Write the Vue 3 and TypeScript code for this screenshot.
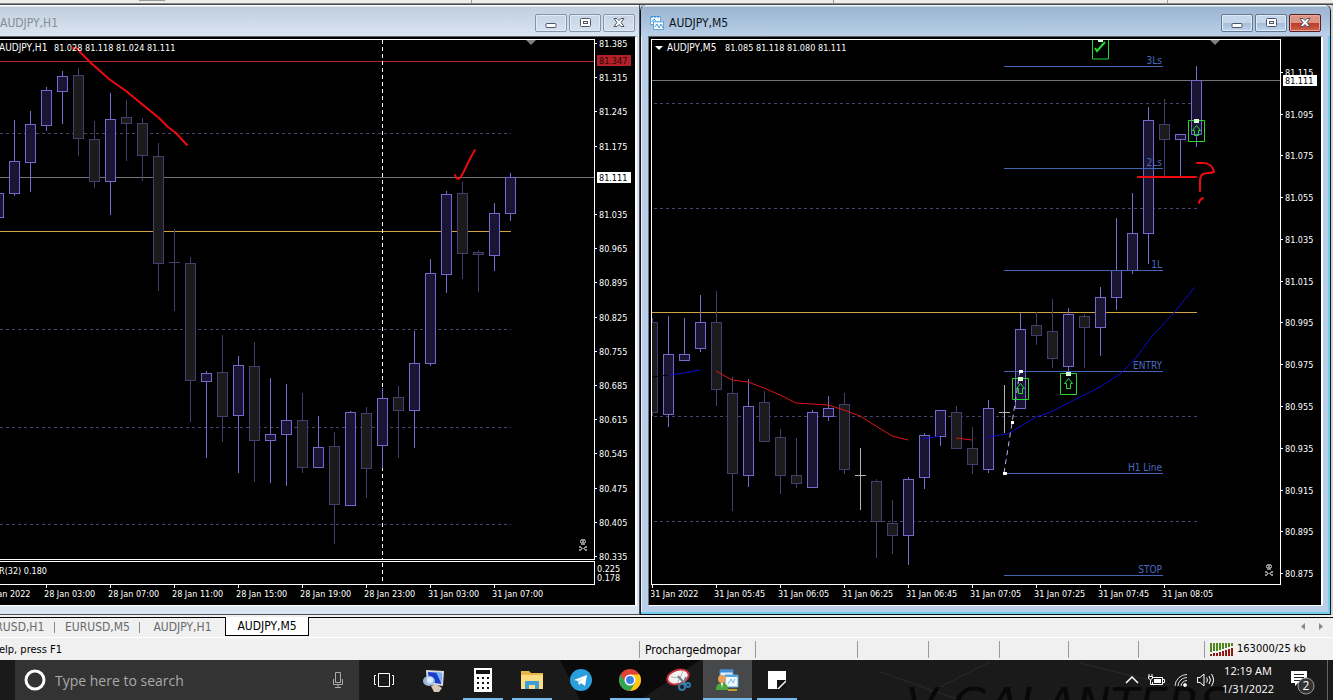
<script setup lang="ts">
type Kind = 'up' | 'down' | 'doji'
type Candle = [x: number, high: number, top: number, bottom: number, low: number, kind: Kind]

interface Tag { y: number; text: string; tone: 'last' | 'alert' }
interface Level { y: number; text: string }
interface ChartWindow {
  id: string
  title: string
  active: boolean
  originX: number
  header: { symbol: string; symbolX: number; valueX: number; values: string }
  priceY: number
  alertY: number | null
  goldY: number
  endX: number
  dashes: number[]
  dashStart: number
  shiftX: number
  skull: [number, number]
  candles: Candle[]
  prices: [number, string][]
  tags: Tag[]
  times: [number, string][]
  levels: Level[]
}

const h1: ChartWindow = {
  id: 'h1',
  title: 'AUDJPY,H1',
  active: false,
  originX: 0,
  header: { symbol: 'AUDJPY,H1', symbolX: -1, valueX: 54, values: '81.028 81.118 81.024 81.111' },
  priceY: 177,
  alertY: 61,
  goldY: 231,
  endX: 511,
  dashes: [133, 329, 427, 524],
  dashStart: 0,
  shiftX: 531,
  skull: [583, 545],
  candles: [
    [-2, 193, 193, 217, 217, 'up'], [14, 120, 161, 193, 195, 'up'], [30, 111, 124, 162, 191, 'up'],
    [46, 87, 90, 125, 130, 'up'], [62, 71, 76, 91, 123, 'up'], [78, 68, 75, 138, 155, 'down'],
    [94, 121, 139, 181, 187, 'down'], [110, 93, 119, 181, 214, 'up'], [126, 100, 117, 123, 160, 'down'],
    [142, 118, 123, 155, 180, 'down'], [158, 143, 156, 263, 290, 'down'], [174, 229, 262, 262, 310, 'down'],
    [190, 257, 263, 380, 421, 'down'], [206, 371, 373, 381, 457, 'up'], [222, 335, 372, 416, 441, 'down'],
    [238, 356, 365, 415, 472, 'up'], [254, 342, 366, 440, 481, 'down'], [270, 378, 434, 440, 482, 'up'],
    [286, 384, 420, 434, 485, 'up'], [302, 393, 420, 467, 472, 'down'], [318, 416, 447, 467, 467, 'up'],
    [334, 432, 446, 504, 543, 'down'], [350, 411, 412, 505, 505, 'up'], [366, 407, 413, 468, 497, 'down'],
    [382, 388, 398, 445, 467, 'up'], [398, 386, 397, 410, 457, 'down'], [414, 331, 363, 410, 447, 'up'],
    [430, 259, 273, 363, 365, 'up'], [446, 191, 194, 274, 292, 'up'], [462, 182, 193, 253, 278, 'down'],
    [478, 250, 252, 254, 291, 'down'], [494, 203, 213, 255, 270, 'up'], [510, 173, 177, 213, 220, 'up'],
  ],
  prices: [
    [43, '81.385'], [77, '81.315'], [111, '81.245'], [146, '81.175'], [214, '81.035'], [248, '80.965'],
    [282, '80.895'], [317, '80.825'], [351, '80.755'], [385, '80.685'], [419, '80.615'], [453, '80.545'],
    [488, '80.475'], [522, '80.405'], [556, '80.335'],
  ],
  tags: [{ y: 60, text: '81.347', tone: 'alert' }, { y: 177, text: '81.111', tone: 'last' }],
  times: [
    [-16, '27 Jan 2022'], [46, '28 Jan 03:00'], [110, '28 Jan 07:00'], [174, '28 Jan 11:00'], [238, '28 Jan 15:00'],
    [302, '28 Jan 19:00'], [366, '28 Jan 23:00'], [430, '31 Jan 03:00'], [494, '31 Jan 07:00'],
  ],
  levels: [],
}

const m5: ChartWindow = {
  id: 'm5',
  title: 'AUDJPY,M5',
  active: true,
  originX: 652,
  header: { symbol: 'AUDJPY,M5', symbolX: 667, valueX: 725, values: '81.085 81.118 81.080 81.111' },
  priceY: 80,
  alertY: null,
  goldY: 312,
  endX: 1197,
  dashes: [103, 208, 416, 521],
  dashStart: 654,
  shiftX: 1215,
  skull: [1269, 570],
  candles: [
    [652, 318, 322, 412, 415, 'down'], [668, 316, 354, 414, 426, 'up'], [684, 318, 354, 360, 360, 'up'],
    [700, 295, 322, 348, 351, 'up'], [716, 291, 322, 389, 405, 'down'], [732, 377, 393, 473, 510, 'down'],
    [748, 379, 406, 475, 486, 'up'], [764, 391, 402, 441, 441, 'down'], [780, 429, 437, 475, 493, 'down'],
    [796, 438, 475, 483, 487, 'down'], [812, 410, 412, 487, 487, 'up'], [828, 396, 408, 416, 420, 'up'],
    [844, 393, 404, 469, 473, 'down'], [860, 448, 475, 475, 509, 'doji'], [876, 479, 481, 521, 557, 'down'],
    [892, 500, 523, 535, 553, 'down'], [908, 477, 479, 535, 564, 'up'], [924, 433, 435, 477, 488, 'up'],
    [940, 410, 410, 436, 445, 'up'], [956, 406, 412, 448, 448, 'down'], [972, 427, 448, 464, 473, 'down'],
    [988, 400, 408, 469, 472, 'up'], [1004, 385, 412, 412, 432, 'doji'], [1020, 313, 329, 408, 408, 'up'],
    [1036, 312, 325, 335, 344, 'down'], [1052, 299, 331, 358, 367, 'down'], [1068, 308, 314, 366, 372, 'up'],
    [1084, 314, 316, 327, 367, 'down'], [1100, 287, 297, 327, 355, 'up'], [1116, 218, 270, 297, 309, 'up'],
    [1132, 193, 233, 270, 273, 'up'], [1148, 107, 120, 233, 263, 'up'], [1164, 99, 124, 139, 176, 'down'],
    [1180, 134, 134, 139, 176, 'up'], [1196, 66, 80, 134, 146, 'up'],
  ],
  prices: [
    [72, '81.115'], [114, '81.095'], [155, '81.075'], [197, '81.055'], [239, '81.035'], [281, '81.015'],
    [322, '80.995'], [364, '80.975'], [406, '80.955'], [448, '80.935'], [490, '80.915'], [531, '80.895'],
    [573, '80.875'],
  ],
  tags: [{ y: 80, text: '81.111', tone: 'last' }],
  times: [
    [652, '31 Jan 2022'], [716, '31 Jan 05:45'], [780, '31 Jan 06:05'], [844, '31 Jan 06:25'], [908, '31 Jan 06:45'],
    [972, '31 Jan 07:05'], [1036, '31 Jan 07:25'], [1100, '31 Jan 07:45'], [1164, '31 Jan 08:05'],
  ],
  levels: [
    { y: 66, text: '3Ls' }, { y: 168, text: '2Ls' }, { y: 270, text: '1L' },
    { y: 371, text: 'ENTRY' }, { y: 473, text: 'H1 Line' }, { y: 575, text: 'STOP' },
  ],
}

const windows = [h1, m5]
const buySignals: [number, number][] = [[1012, 378], [1060, 373], [1188, 120]]
const tabs = ['EURUSD,H1', 'EURUSD,M5', 'AUDJPY,H1', 'AUDJPY,M5']

const plotTop = 40
const axisTop = 39
const axisLeft = 4
</script>

<template>
  <div class="desktop">
    <div class="toolbar-edge"><i class="grip"></i><i class="tick t1"></i><i class="tick t2"></i><i class="tick t3"></i></div>

    <main class="workspace">
      <section v-for="w in windows" :key="w.id" class="win" :class="[w.id, { active: w.active }]">
        <header class="titlebar">
          <svg v-if="w.active" class="win-icon" width="14" height="14" viewBox="0 0 14 14" aria-hidden="true">
            <path d="M.5.500h10v8H.5z" fill="#eef8ff" stroke="#5ba3da" />
            <path d="M1 1h2M4 1h2M7 1h2" stroke="#2f7fc4" />
            <path d="M2 6l2-3 2 2" stroke="#4f9bd6" fill="none" />
            <path d="M3.500 5.500h10v8h-10z" fill="#f6fcff" stroke="#5ba3da" />
            <path d="M4 6h9" stroke="#8fc4ea" />
            <path d="M5 11l2-3 2 4 2-4 2 4" stroke="#4f9bd6" fill="none" />
          </svg>
          <h2>{{ w.title }}</h2>
          <div class="caption-buttons">
            <button type="button" aria-label="Minimize">
              <svg width="14" height="12" viewBox="0 0 14 12"><rect x="2" y="6.500" width="10" height="4" rx="1" fill="#fff" stroke="#4c5566" /></svg>
            </button>
            <button type="button" aria-label="Maximize">
              <svg width="14" height="12" viewBox="0 0 14 12"><rect x="2.500" y="1.500" width="10" height="8" rx="1" fill="#fff" stroke="#4c5566" /><rect x="5.500" y="4.500" width="4" height="2" fill="none" stroke="#4c5566" /></svg>
            </button>
            <button type="button" class="close" aria-label="Close">
              <svg width="14" height="12" viewBox="0 0 14 12"><path d="M2 1.500h3l2 2 2-2h3L9 5.500l3 4H9l-2-2-2 2H2l3-4z" fill="#fff" stroke="#4c5566" /></svg>
            </button>
          </div>
        </header>

        <div class="client">
          <div class="plot">
            <svg class="fill" role="img" :aria-label="w.title + ' chart'">
              <g :transform="`translate(${-w.originX} ${-plotTop})`">
                <rect :x="w.originX" :y="w.priceY" width="100%" height="1" fill="#6f7678" />
                <rect v-if="w.alertY" x="0" :y="w.alertY" width="100%" height="1" fill="#b8242c" />
                <rect :x="w.originX" :y="w.goldY" :width="w.endX - w.originX" height="1" fill="#cfa445" />
                <line
                  v-for="d in w.dashes" :key="d" :x1="w.dashStart" :x2="w.endX" :y1="d + 0.5" :y2="d + 0.5"
                  stroke="#47456e" stroke-dasharray="3 3"
                />
                <line v-if="!w.active" x1="382.5" x2="382.5" y1="40" y2="700" stroke="#fff" stroke-dasharray="4 3" />

                <g v-for="c in w.candles" :key="c[0]" :class="c[5]" shape-rendering="crispEdges">
                  <rect class="edge" :x="c[0]" :y="c[1]" width="1" :height="c[4] - c[1] + 1" />
                  <rect class="edge" :x="c[0] - 5" :y="c[2]" width="11" :height="c[3] - c[2] + 1" />
                  <rect v-if="c[3] > c[2] + 1" class="body" :x="c[0] - 4" :y="c[2] + 1" width="9" :height="c[3] - c[2] - 1" />
                </g>

                <g v-for="l in w.levels" :key="l.text">
                  <rect x="1004" :y="l.y" width="159" height="1" fill="#4464b4" />
                  <text class="level" x="1162" :y="l.y - 2" text-anchor="end">{{ l.text }}</text>
                </g>

                <path :d="`M${w.shiftX - 5} 40h10l-5 5z`" fill="#808080" />
                <g :transform="`translate(${w.skull[0] - 5} ${w.skull[1] - 6})`" fill="#8e8e8e" shape-rendering="crispEdges">
                  <path d="M3 0h4v1h1v3H7v2H3V4H2V1h1z" />
                  <path d="M3 2h1v1H3zM6 2h1v1H6z" fill="#000" />
                  <path d="M1 7h2v1h1v1h2V8h1V7h2v2H7v1h2v2H7v-1H6v-1H4v1H3v1H1v-2h2V9H1z" />
                </g>

                <template v-if="w.active">
                  <path d="M652 377l16-2" class="curve flat" />
                  <path d="M670 375l14-2 16-3" class="curve rising" />
                  <path d="M716 371l16 9 16 2 16 6 16 7 16 8 16 1 16 1 16 5 16 6 16 10 16 10 16 4M956 438l16 2" class="curve falling" />
                  <path d="M924 439l16-3M988 437l19-3 16-9 13-8 15-5 17-9 16-8 16-8 20-13 15-15 18-24 20-21 22-27" class="curve rising" />
                  <path d="M1004 473l8-50 8-52" fill="none" stroke="#b9b4e8" stroke-dasharray="5 4" />
                  <g fill="#fff">
                    <rect x="1003" y="472" width="4" height="3" /><rect x="1011" y="421" width="3" height="3" /><rect x="1019" y="370" width="4" height="3" />
                  </g>
                  <path d="M1092.500 39v20h16V39" class="signal" />
                  <path d="M1095 48l2 3 8-9" class="signal check" />
                  <rect x="1098" y="40" width="5" height="2" fill="#d8ffd8" />
                  <g v-for="s in buySignals" :key="s[0]" :transform="`translate(${s[0]} ${s[1]})`">
                    <path d="M.5.500h16v21H.5z" class="signal" />
                    <path d="M8.500 5.500l4 5h-2v5h-4v-5h-2z" class="signal" />
                    <rect x="6" y="-1" width="5" height="4" fill="#d8ffd8" />
                  </g>
                  <g class="pen">
                    <path d="M1138 177h58" />
                    <path d="M1197 163h6c6 0 10 4 11 9-4 2-11 0-13 4l-1 4v11" />
                    <path d="M1199 203q0-3 4-5" />
                  </g>
                  <path d="M655 46h8l-4 4z" fill="#fff" />
                </template>
                <g v-else class="pen">
                  <path d="M73 48q4-1 7 4l11 11 18 16 17 12 17 14 16 13 9 9 8 6 11 12" />
                  <path d="M455 175c1 3 3 5 5 3 5-7 9-19 15-28" />
                </g>

                <text class="symbol" :x="w.header.symbolX" y="51">{{ w.header.symbol }}</text>
                <text
                  v-for="(v, i) in w.header.values.split(' ')" :key="i" class="value" :x="w.header.valueX + i * 31" y="51"
                >{{ v }}</text>
              </g>
            </svg>
          </div>

          <div v-if="!w.active" class="indicator">
            <svg class="fill" role="img" aria-label="ATR indicator">
              <line x1="382.5" x2="382.5" y1="1" y2="30" stroke="#fff" stroke-dasharray="4 3" />
              <text class="value" x="47" y="12" text-anchor="end">ATR(32) 0.180</text>
            </svg>
          </div>

          <div class="price-axis">
            <svg class="fill" aria-label="Price scale">
              <g :transform="`translate(0 ${-axisTop})`">
                <g v-for="p in w.prices" :key="p[1]">
                  <rect x="0" :y="p[0]" width="2" height="1" fill="#fff" />
                  <text class="value" :x="axisLeft" :y="p[0] + 4">{{ p[1] }}</text>
                </g>
                <g v-for="t in w.tags" :key="t.text" :class="t.tone">
                  <rect class="tag" x="2" :y="t.y - 5" width="34" height="11" />
                  <text class="value" :x="axisLeft" :y="t.y + 4">{{ t.text }}</text>
                </g>
                <g v-if="!w.active">
                  <text class="value" x="2" y="572">0.225</text>
                  <text class="value" x="2" y="581">0.178</text>
                </g>
              </g>
            </svg>
          </div>

          <div class="time-axis">
            <svg class="fill" aria-label="Time scale">
              <g :transform="`translate(${w.active ? 1 - w.originX : 0} 0)`">
                <g v-for="t in w.times" :key="t[1]">
                  <rect :x="t[0]" y="0" width="1" height="3" fill="#fff" />
                  <text class="value" :x="t[0] - 2" y="12">{{ t[1] }}</text>
                </g>
              </g>
            </svg>
          </div>
        </div>
      </section>
    </main>

    <nav class="tabs" aria-label="Charts">
      <div class="tab-clip">
        <button v-for="t in tabs" :key="t" type="button" :class="{ current: t === 'AUDJPY,M5' }">{{ t }}</button>
      </div>
      <div class="tab-rest">
        <button type="button" aria-label="Scroll tabs left"><svg width="6" height="8"><path d="M5 0v7L1 3.500z" fill="#8a8a8a" /></svg></button>
        <button type="button" aria-label="Scroll tabs right"><svg width="6" height="8"><path d="M1 0v7l4-3.500z" fill="#8a8a8a" /></svg></button>
      </div>
    </nav>

    <div class="status">
      <div class="help"><span>For Help, press F1</span></div>
      <div class="cell profile">Prochargedmopar</div>
      <div class="cell w102"></div>
      <div class="cell w71"></div>
      <div class="cell w71"></div>
      <div class="cell w69"></div>
      <div class="cell w70"></div>
      <div class="cell w66"></div>
      <div class="cell traffic">
        <svg width="24" height="13" viewBox="0 0 24 13" aria-hidden="true">
          <path d="M1 0v9M4 0v8M7 0v8M10 0v7M13 0v6M16 0v5M19 0v4M22 0v3" stroke="#4c8a1c" stroke-width="2" />
          <path d="M1 11v2M4 10v3M7 10v3M10 9v4M13 8v5M16 7v6M19 6v7M22 5v8" stroke="#8c1a14" stroke-width="2" />
        </svg>
        163000/25 kb
      </div>
    </div>

    <footer class="taskbar">
      <svg class="wallpaper" aria-hidden="true">
        <path d="M560 0h140l-60 40h-60z" fill="#000" opacity=".6" />
        <path d="M880 12l80 28M990 2l-60 30M1080 3l90 22" stroke="#2b2b2b" fill="none" />
        <text x="906" y="61">V GALANTERS</text>
      </svg>
      <label class="search">
        <svg width="22" height="22" viewBox="0 0 22 22" aria-hidden="true"><circle cx="11" cy="11" r="9" fill="none" stroke="#fff" stroke-width="3" /></svg>
        <input type="text" placeholder="Type here to search" aria-label="Type here to search" />
        <svg width="12" height="18" viewBox="0 0 12 18" aria-hidden="true"><path d="M3.500 1.500h5v10h-5zM1.500 8v5.500h9V8M6 13.500V17M3 16.500h6" fill="none" stroke="#aaa" /></svg>
      </label>

      <button type="button" class="app first" aria-label="Task view">
        <svg width="22" height="16" viewBox="0 0 22 16"><path d="M5.500 1.500h11v13h-11zM3 3.500H1.500v9H3M19 3.500h1.500v9H19" fill="none" stroke="#fff" /></svg>
      </button>
      <button type="button" class="app" aria-label="Remote desktop">
        <svg width="26" height="26" viewBox="0 0 26 26">
          <path d="M5 3l18 1-1 15-16-2z" fill="#d7dbe2" /><path d="M7 5l14 1-1 11-12-2z" fill="#183fc8" /><path d="M15 5l6 1-1 10z" fill="#7db2ff" />
          <ellipse cx="8" cy="14" rx="6" ry="5" fill="#a9c8ea" opacity=".9" /><circle cx="9" cy="13" r="3" fill="#d9ebf8" />
          <path d="M10 19l5-2 6 4-3 4h-5z" fill="#d9c7b8" />
        </svg>
      </button>
      <button type="button" class="app running" aria-label="Calculator">
        <svg width="18" height="24" viewBox="0 0 18 24">
          <path d="M0 0h18v24H0z" fill="#fff" /><path d="M2 2h14v4H2z" fill="#141414" />
          <path d="M3 10h12M3 15h12M3 20h12" stroke="#141414" stroke-width="2" stroke-dasharray="2 3" />
        </svg>
      </button>
      <button type="button" class="app running" aria-label="File Explorer">
        <svg width="24" height="20" viewBox="0 0 24 20">
          <path d="M1 1h8l2 2h12v16H1z" fill="#e8b64a" /><path d="M1 5h22v14H1z" fill="#fcdd83" /><path d="M5 19v-8h14v8h-4v-4H9v4z" fill="#3d9fd6" />
        </svg>
      </button>
      <button type="button" class="app" aria-label="Telegram">
        <svg width="22" height="22" viewBox="0 0 22 22"><circle cx="11" cy="11" r="11" fill="#2a9fdc" /><path d="M4 11l13-5-2 11-4-3-2 2-1-4z" fill="#fff" /><path d="M8 12l7-4-6 5v3z" fill="#bcdcf0" /></svg>
      </button>
      <button type="button" class="app running" aria-label="Chrome">
        <svg width="22" height="22" viewBox="0 0 22 22">
          <circle cx="11" cy="11" r="11" fill="#e04436" />
          <path d="M11 5.500h9.500A11 11 0 0 1 11 22l5-8.500z" fill="#fbc916" />
          <path d="M1.500 5.500l5 8 9.500 0L11 22A11 11 0 0 1 1.500 5.500z" fill="#31a650" />
          <circle cx="11" cy="11" r="5.500" fill="#fff" /><circle cx="11" cy="11" r="4" fill="#3b7fe8" />
        </svg>
      </button>
      <button type="button" class="app" aria-label="Snipping Tool">
        <svg width="26" height="24" viewBox="0 0 26 24">
          <ellipse cx="12" cy="9" rx="11" ry="7" transform="rotate(-18 12 9)" fill="#f4f1f2" stroke="#c6303a" stroke-width="2" />
          <path d="M5 9l9 1 3-7M14 10l-3 5" stroke="#b5b0b8" fill="none" />
          <path d="M12 8l8 9M20 9l-3 8" stroke="#6d8090" stroke-width="2" />
          <circle cx="16" cy="19" r="3" fill="none" stroke="#2f7ca8" stroke-width="2" /><circle cx="22" cy="17" r="2" fill="none" stroke="#2f7ca8" stroke-width="2" />
        </svg>
      </button>
      <button type="button" class="app current" aria-label="MetaTrader">
        <svg width="24" height="22" viewBox="0 0 24 22">
          <path d="M4 1h13v10H4z" fill="#dff0fc" stroke="#3f8fd2" /><path d="M4 2h13" stroke="#3f8fd2" stroke-width="3" />
          <path d="M9 6h13v12H9z" fill="#eef8ff" stroke="#5aa6dd" /><path d="M9 7h13" stroke="#5aa6dd" stroke-width="2" />
          <path d="M12 15l3-5 2 4 2-4" stroke="#7fb5df" fill="none" />
          <circle cx="6" cy="10" r="4" fill="#e9a05f" /><path d="M0 21c0-5 2-7 6-7s6 2 6 7z" fill="#4ea83c" /><path d="M5 14h2l-1 5z" fill="#fff" />
          <path d="M12 21h9" stroke="#c99b2c" stroke-width="2" />
        </svg>
      </button>
      <button type="button" class="app running" aria-label="Sticky Notes">
        <svg width="18" height="18" viewBox="0 0 18 18"><path d="M0 0h18v18H0z" fill="#fff" /><path d="M9 18V9h9z" fill="#141414" /><path d="M11 18l7-7v7z" fill="#141414" /></svg>
      </button>

      <div class="tray">
        <button type="button" aria-label="Show hidden icons"><svg width="14" height="8"><path d="M1 7l6-6 6 6" fill="none" stroke="#fff" stroke-width="1.500" /></svg></button>
        <button type="button" class="battery" aria-label="Battery">
          <svg width="17" height="12" viewBox="0 0 17 12"><path d="M5 3.500h9.500v7H4.500V8M14.500 5.500h2v3h-2M1 0v2M4 0v2M.5 2.500h4v2l-2 1-2-1zM2.500 6v4.500H5" fill="none" stroke="#fff" /><path d="M6 5h7v4H6z" fill="#fff" /></svg>
        </button>
        <button type="button" aria-label="Network">
          <svg width="14" height="14" viewBox="0 0 14 14" fill="none" stroke="#ddd"><path d="M1 13A12 12 0 0 1 13 1.500M4 13a9 9 0 0 1 9-8.500M7 13a6 6 0 0 1 6-5.500" /><circle cx="11" cy="12" r="1.500" fill="#fff" /></svg>
        </button>
        <button type="button" aria-label="Volume">
          <svg width="17" height="14" viewBox="0 0 17 14" fill="none" stroke="#fff"><path d="M.5 4.500H3l4-3.500v12L3 9.500H.5z" /><path d="M9.500 4.500q2 2.500 0 5M12 3q3 4 0 8M14.500 1q4 6 0 12" /></svg>
        </button>
        <div class="clock"><time>12:19 AM</time><time>1/31/2022</time></div>
        <button type="button" class="notes" aria-label="Notifications">
          <svg width="24" height="26" viewBox="0 0 24 26">
            <path d="M0 1h16v12H7l-3 3v-3H0z" fill="#fff" /><path d="M3 4.500h10M3 7.500h10M3 10.500h6" stroke="#222" />
            <circle cx="15" cy="16" r="8" fill="#333" stroke="#999" />
            <text x="15" y="20" text-anchor="middle" class="badge">2</text>
          </svg>
        </button>
        <i class="peek"></i>
      </div>
    </footer>
  </div>
</template>

<style>
body { margin: 0; background: #f0f0f0; }
</style>

<style scoped>
.desktop {
  display: flex; flex-direction: column; min-height: 100vh; overflow: hidden;
  background: #f0f0f0; color: #000; font-family: "DejaVu Sans Condensed", "DejaVu Sans", "Open Sans", sans-serif; font-size: 12px;
}
button { margin: 0; padding: 0; border: 0; background: none; font: inherit; color: inherit; display: flex; align-items: center; justify-content: center; }
svg { display: block; flex: none; }
.fill { width: 100%; height: 100%; overflow: hidden; }

.toolbar-edge { height: 3px; position: relative; border-bottom: 1px solid #8b8b8b; background: #efedea; }
.grip { position: absolute; left: 139px; top: 0; width: 26px; height: 1px; background: #999; }
.tick { position: absolute; top: 0; width: 1px; height: 3px; background: #999; }
.t1 { left: 471px; }
.t2 { left: 833px; }
.t3 { left: 1167px; }

.workspace { flex: 1; display: grid; grid-template-columns: minmax(0, 640fr) minmax(0, 691fr) 2px; border-top: 1px solid #45484c; background: #cfd3d6; }
.win { display: flex; flex-direction: column; box-sizing: border-box; min-width: 0; border-bottom: 1px solid #4b4f5a; border-right: 1px solid #4b4f5a; background: #dae5f1; }
.win.active { background: #b9cfe9; border: 1px solid #10151c; border-top: 0; border-radius: 6px 6px 0 0; box-shadow: inset -2px -2px #72cdef, inset 1px 1px #e8f1fa; }
.titlebar { height: 31px; display: flex; align-items: center; padding-right: 4px; background: linear-gradient(#fff 0 1px, #c1cedc 2px, #d9e5f2); overflow: hidden; }
.active .titlebar { padding: 0 9px 0 9px; border-radius: 6px 6px 0 0; background: linear-gradient(#f4f8fc 0 1px, #9bb4d0 2px, #bad0e9); }
.titlebar h2 { margin: 0; padding-top: 5px; font-size: 12px; font-weight: 400; color: #858d96; }
.active .titlebar h2 { margin-left: 5px; color: #0b1420; }
.win-icon { margin-top: 5px; }
.caption-buttons { display: flex; gap: 2px; margin: 5px 0 0 auto; }
.caption-buttons button { box-sizing: border-box; width: 32px; height: 18px; border: 1px solid #8494aa; border-radius: 2px; box-shadow: inset 0 0 0 1px #e2ebf5; }
.active .caption-buttons button { border-color: #5f7792; background: linear-gradient(#c5d7ea 0 50%, #a4bdd8 50%, #bfd5ec); }
.active .caption-buttons .close { border-color: #5b1f22; background: linear-gradient(#dc9485 0 48%, #bd3a25 50%, #d0604c); box-shadow: inset 0 0 0 1px #e3a99e; }

.client {
  flex: 1; display: grid; min-height: 0; box-sizing: border-box; margin: 0 2px 8px 0; padding-top: 2px;
  grid-template: "plot axis" minmax(0, 1fr) "ind axis" auto "time time" 20px / minmax(0, 1fr) 40px;
  background: #000; border: solid #fff; border-width: 1px 2px 1px 0; border-top-color: #5d6268;
}
.active .client { margin: 0 7px 8px 7px; padding-left: 2px; border-left: 1px solid #6c7078; }
.plot { grid-area: plot; border: solid #fff; border-width: 1px 1px 1px 0; min-height: 480px; position: relative; }
.active .plot { border-left-width: 1px; }
.plot > svg { position: absolute; inset: 0; }
.indicator { grid-area: ind; margin-top: 1px; height: 22px; border: solid #fff; border-width: 1px 1px 1px 0; }
.price-axis { grid-area: axis; position: relative; min-height: 0; }
.price-axis > svg { position: absolute; inset: 0; }
.time-axis { grid-area: time; }

.value { font-size: 9px; fill: #fff; }
.symbol { font-size: 10px; fill: #fff; }
.level { font-size: 10px; fill: #4a6cc0; }
.last .tag { fill: #fff; }
.last .value { fill: #000; }
.alert .tag { fill: #b3202a; }
.alert .value { fill: #2a0608; }
.up .edge { fill: #7469cc; }
.up .body { fill: #1a1534; }
.down .edge { fill: #453d6c; }
.down .body { fill: #1b1b1d; }
.doji .edge { fill: #b4b4b4; }
.curve { fill: none; stroke-width: 1; }
.rising { stroke: #0c0cd0; }
.falling { stroke: #e01418; }
.flat { stroke: #000; }
.signal { fill: none; stroke: #25d832; }
.check { stroke-width: 2; }
.pen { fill: none; stroke: #ee0a0e; stroke-width: 2; stroke-linecap: round; stroke-linejoin: round; }

.tabs { display: flex; height: 20px; margin-top: 2px; }
.tab-clip { display: flex; justify-content: flex-end; width: 309px; overflow: hidden; flex: none; }
.tab-clip button { box-sizing: border-box; flex: none; height: 19px; width: 85px; border-top: 1px solid #000; color: #6a6a6a; position: relative; }
.tab-clip button:nth-child(-n+2)::after { content: ""; position: absolute; right: 0; top: 4px; width: 1px; height: 11px; background: #888; }
.tab-clip .current { width: 84px; background: #fff; color: #000; border: 1px solid #000; border-top: 0; }
.tab-rest { flex: 1; display: flex; justify-content: flex-end; gap: 12px; padding-right: 9px; height: 18px; border-top: 1px solid #000; }

.status { height: 22px; display: flex; border-top: 1px solid #fff; align-items: stretch; line-height: 24px; white-space: nowrap; }
.help { flex: 1; }
.help span { display: flex; justify-content: flex-end; width: 62px; font-size: 11px; }
.cell { box-sizing: border-box; position: relative; padding-left: 6px; }
.cell::before { content: ""; position: absolute; left: 0; top: 3px; height: 17px; width: 1px; background: #9a9a9a; }
.profile { width: 116px; }
.w102 { width: 102px; }
.w71 { width: 71px; }
.w69 { width: 69px; }
.w70 { width: 70px; }
.w66 { width: 66px; }
.traffic { width: 129px; display: flex; align-items: center; gap: 3px; font-size: 11px; }

.taskbar { height: 40px; display: flex; position: relative; background: #1a1a1b; color: #fff; font-family: "Open Sans", "Noto Sans", sans-serif; overflow: hidden; }
.taskbar > * { position: relative; }
.taskbar .wallpaper { position: absolute; inset: 0; width: 100%; height: 40px; }
.wallpaper text { font: italic 46px "DejaVu Sans", sans-serif; fill: #080808; }
.search { box-sizing: border-box; width: 344px; margin-left: 15px; padding: 0 15px 0 9px; display: flex; align-items: center; gap: 9px; background: #333; }
.search input { flex: 1; min-width: 0; border: 0; padding: 0; outline: 0; background: none; color: #ddd; font: 14px "Open Sans", "Noto Sans", sans-serif; }
.search input::placeholder { color: #a9a9a9; opacity: 1; }
.app { width: 49px; height: 40px; flex: none; }
.app.first { width: 50px; }
.app.running::after, .app.current::after { content: ""; position: absolute; bottom: 0; left: 5px; right: 4px; height: 2px; background: #76b9ed; }
.app.current { background: #474849; }
.app.current::after { left: 0; right: 0; }
.tray { display: flex; margin-left: auto; }
.tray button { width: 24px; }
.tray .battery { width: 25px; }
.clock { width: 62px; display: flex; flex-direction: column; align-items: center; padding-top: 2px; font-size: 11px; line-height: 18px; }
.tray .notes { width: 48px; padding-top: 6px; }
.badge { font: 12px "Open Sans", sans-serif; fill: #fff; }
.peek { width: 6px; box-sizing: border-box; border-left: 1px solid #666; }
</style>
